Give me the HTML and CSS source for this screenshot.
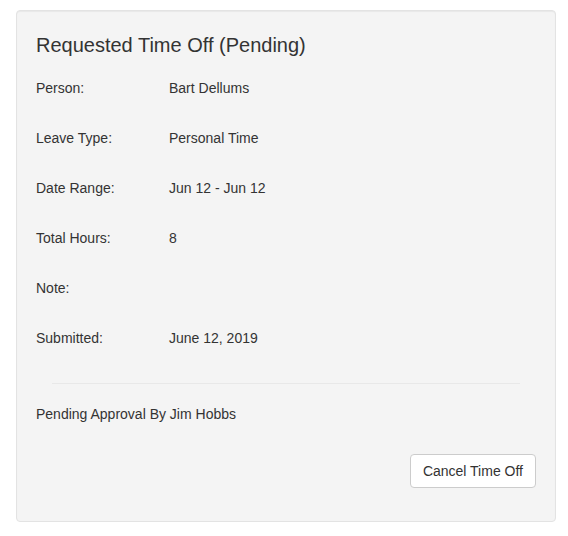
FILE: index.html
```html
<!DOCTYPE html>
<html lang="en">
<head>
<meta charset="utf-8">
<title>Requested Time Off</title>
<link rel="stylesheet" href="styles.css">
</head>
<body>
<div class="card">
  <h3 class="title">Requested Time Off (Pending)</h3>
  <div class="row"><span class="label">Person:</span><span class="value">Bart Dellums</span></div>
  <div class="row"><span class="label">Leave Type:</span><span class="value">Personal Time</span></div>
  <div class="row"><span class="label">Date Range:</span><span class="value">Jun 12 - Jun 12</span></div>
  <div class="row"><span class="label">Total Hours:</span><span class="value">8</span></div>
  <div class="row"><span class="label">Note:</span><span class="value"></span></div>
  <div class="row"><span class="label">Submitted:</span><span class="value">June 12, 2019</span></div>
  <hr class="divider">
  <p class="status">Pending Approval By Jim Hobbs</p>
  <div class="actions"><button class="btn" type="button">Cancel Time Off</button></div>
</div>
</body>
</html>
```
FILE: styles.css
```css
html, body {
  margin: 0;
  padding: 0;
  background: #fff;
}
body {
  font-family: "Liberation Sans", Arial, Helvetica, sans-serif;
  font-size: 14px;
  line-height: 20px;
  color: #333;
}
.card {
  box-sizing: border-box;
  margin: 10px 0 0 16px;
  width: 540px;
  height: 512px;
  padding: 19px;
  background: #f4f4f4;
  border: 1px solid #e3e3e3;
  border-radius: 4px;
  box-shadow: inset 0 1px 1px rgba(0, 0, 0, 0.05);
}
.title {
  margin: 4px 0 7px;
  font-size: 20px;
  line-height: 22px;
  font-weight: 400;
  color: #333;
}
.row {
  display: flex;
  padding: 15px 0;
}
.label {
  width: 133px;
  flex: none;
}
.divider {
  margin: 20px 16px 0;
  border: 0;
  border-top: 1px solid #e8e8e8;
  height: 0;
}
.status {
  margin: 20px 0 0;
}
.actions {
  display: flex;
  justify-content: flex-end;
  margin-top: 30px;
}
.btn {
  font-family: inherit;
  font-size: 14px;
  line-height: 20px;
  color: #333;
  padding: 6px 12px;
  background: #fff;
  border: 1px solid #ccc;
  border-radius: 4px;
  cursor: pointer;
}
```
